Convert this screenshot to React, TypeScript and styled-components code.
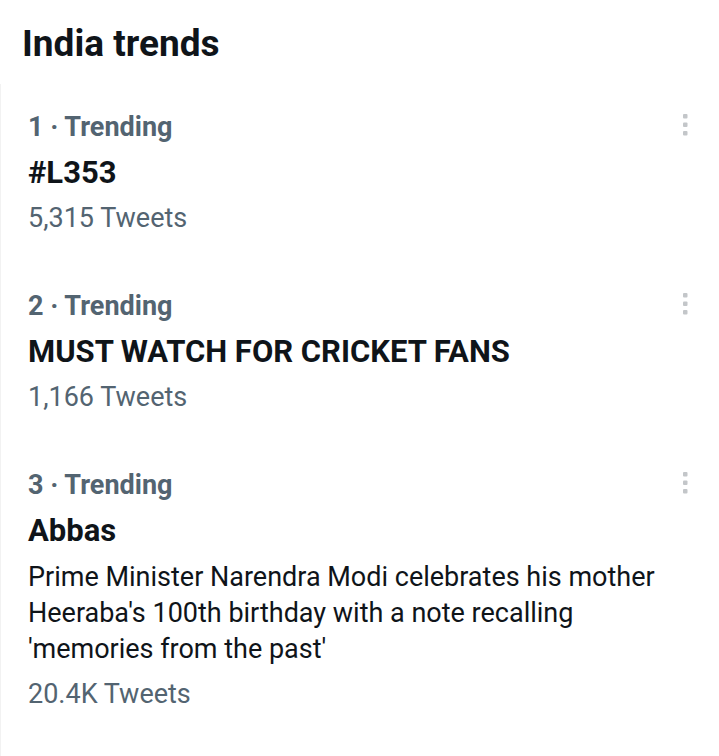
import React from 'react'
import styled, { createGlobalStyle } from 'styled-components'

type Trend = {
  rank: number
  name: string
  description?: string
  tweets: string
}

const trends: Trend[] = [
  { rank: 1, name: '#L353', tweets: '5,315 Tweets' },
  { rank: 2, name: 'MUST WATCH FOR CRICKET FANS', tweets: '1,166 Tweets' },
  {
    rank: 3,
    name: 'Abbas',
    description:
      "Prime Minister Narendra Modi celebrates his mother Heeraba's 100th birthday with a note recalling 'memories from the past'",
    tweets: '20.4K Tweets'
  }
]

const GlobalStyle = createGlobalStyle`
  html, body {
    margin: 0;
    padding: 0;
    background: #ffffff;
  }
  body {
    font-family: Roboto, "Noto Sans", "Liberation Sans", sans-serif;
    color: #0f1419;
    -webkit-font-smoothing: antialiased;
  }
`

function MoreIcon() {
  return (
    <svg width="6" height="24" viewBox="0 0 6 24" aria-hidden="true">
      <rect x="1" y="1" width="4.5" height="4.5" rx="1" fill="#c3c6c9" />
      <rect x="1" y="9.5" width="4.5" height="4.5" rx="1" fill="#c3c6c9" />
      <rect x="1" y="18" width="4.5" height="4.5" rx="1" fill="#c3c6c9" />
    </svg>
  )
}

export default function App() {
  return (
    <>
      <GlobalStyle />
      <Page>
        <Header>India trends</Header>
        <TrendList>
          {trends.map(trend => (
            <TrendItem key={trend.rank}>
              <TrendBody>
                <Meta>{trend.rank} · Trending</Meta>
                <TrendName>{trend.name}</TrendName>
                {trend.description && <Description>{trend.description}</Description>}
                <Count>{trend.tweets}</Count>
              </TrendBody>
              <MoreButton aria-label="More">
                <MoreIcon />
              </MoreButton>
            </TrendItem>
          ))}
        </TrendList>
      </Page>
    </>
  )
}

const Page = styled.div`
  width: 719px;
  min-height: 756px;
  background: #ffffff;
`

const Header = styled.h2`
  margin: 0;
  padding: 22px 22px 18px;
  font-size: 37px;
  line-height: 44px;
  font-weight: 700;
  color: #0f1419;
`

const TrendList = styled.div`
  display: flex;
  flex-direction: column;
  border-left: 1px solid #f2f2f2;
  min-height: 672px;
`

const TrendItem = styled.div`
  display: flex;
  align-items: flex-start;
  padding: 25px 31px 27px 27px;
`

const TrendBody = styled.div`
  flex: 1;
  display: flex;
  flex-direction: column;
  gap: 9px;
`

const Meta = styled.div`
  font-size: 27px;
  line-height: 36px;
  font-weight: 700;
  color: #536471;
`

const TrendName = styled.div`
  margin-top: 1px;
  font-size: 31px;
  line-height: 36px;
  font-weight: 700;
  color: #0f1419;
`

const Description = styled.div`
  padding-top: 1px;
  font-size: 27px;
  line-height: 36px;
  font-weight: 400;
  color: #0f1419;
`

const Count = styled.div`
  font-size: 27px;
  line-height: 36px;
  font-weight: 400;
  color: #536471;
`

const MoreButton = styled.button`
  display: flex;
  padding: 0;
  margin: 4px 0 0;
  border: none;
  background: none;
  cursor: pointer;
`
